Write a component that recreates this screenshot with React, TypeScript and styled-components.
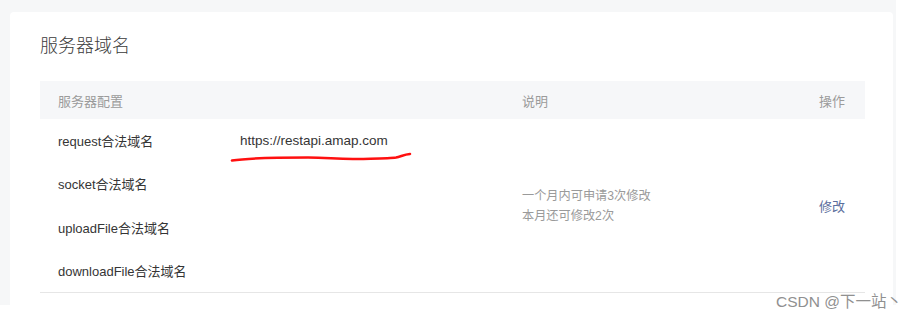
import React from "react";
import styled, { createGlobalStyle } from "styled-components";

const Global = createGlobalStyle`
  html, body { margin: 0; padding: 0; background: #ffffff; }
  body { font-family: "Liberation Sans", "Noto Sans CJK SC", sans-serif; }
`;

const Page = styled.div`
  position: relative;
  width: 921px;
  height: 318px;
  overflow: hidden;
  background: #ffffff;
`;

const Backdrop = styled.div`
  width: 896px;
  height: 305px;
  box-sizing: border-box;
  padding: 12px 3px 0 10px;
  background: #f6f7f8;
  display: flex;
`;

const Card = styled.section`
  flex: 1;
  background: #ffffff;
  border-radius: 4px 4px 0 0;
  padding: 22px 28px 0 30px;
  display: flex;
  flex-direction: column;
`;

const Title = styled.h2`
  margin: 0 0 23px 0;
  font-size: 18px;
  line-height: 24px;
  font-weight: 300;
  color: #3a3a3a;
`;

const Grid = styled.div`
  display: grid;
  grid-template-columns: 200px 282px 1fr auto;
`;

const HeadCell = styled.div<{ $span?: number; $first?: boolean; $last?: boolean }>`
  grid-column: span ${(p) => p.$span ?? 1};
  background: #f6f7f9;
  height: 38px;
  display: flex;
  align-items: center;
  font-size: 13px;
  color: #9b9b9b;
  padding-left: ${(p) => (p.$first ? "18px" : "0")};
  padding-right: ${(p) => (p.$last ? "20px" : "0")};
`;

const Body = styled.div`
  grid-column: 1 / -1;
  display: grid;
  grid-template-columns: 200px 282px 1fr auto;
  grid-template-rows: repeat(4, 43.25px);
  border-bottom: 1px solid #e6e6e6;
`;

const NameCell = styled.div<{ $row: number }>`
  grid-column: 1;
  grid-row: ${(p) => p.$row};
  display: flex;
  align-items: center;
  padding-left: 18px;
  font-size: 13px;
  color: #353535;
`;

const UrlCell = styled.div`
  grid-column: 2;
  grid-row: 1;
  display: flex;
  align-items: center;
  font-size: 13.5px;
  color: #353535;
`;

const DescCell = styled.div`
  grid-column: 3;
  grid-row: 1 / span 4;
  display: flex;
  flex-direction: column;
  justify-content: center;
  font-size: 12.2px;
  line-height: 20px;
  color: #9a9a9a;
`;

const ActionCell = styled.div`
  grid-column: 4;
  grid-row: 1 / span 4;
  display: flex;
  align-items: center;
  padding-right: 20px;
  font-size: 13px;
  color: #5a6d9c;
  cursor: pointer;
`;

const Scribble = styled.svg`
  position: absolute;
  left: 228px;
  top: 148px;
  pointer-events: none;
`;

const Watermark = styled.div`
  position: absolute;
  left: 776px;
  top: 291px;
  font-size: 15.5px;
  line-height: 22px;
  color: #909090;
  white-space: nowrap;
`;

const names = ["request合法域名", "socket合法域名", "uploadFile合法域名", "downloadFile合法域名"];

export default function App() {
  return (
    <Page>
      <Global />
      <Backdrop>
        <Card>
          <Title>服务器域名</Title>
          <Grid>
            <HeadCell $span={2} $first>服务器配置</HeadCell>
            <HeadCell>说明</HeadCell>
            <HeadCell $last>操作</HeadCell>
            <Body>
              {names.map((n, i) => (
                <NameCell key={n} $row={i + 1}>{n}</NameCell>
              ))}
              <UrlCell>https://restapi.amap.com</UrlCell>
              <DescCell>
                <span>一个月内可申请3次修改</span>
                <span>本月还可修改2次</span>
              </DescCell>
              <ActionCell>修改</ActionCell>
            </Body>
          </Grid>
        </Card>
      </Backdrop>
      <Scribble width="190" height="20" viewBox="0 0 190 20">
        <path
          d="M4 12.5 C 20 10, 50 9.5, 80 9.5 C 100 9.5, 110 11.5, 130 11 C 150 10.5, 162 10.5, 168 9.5 C 173 8.5, 176 6.5, 182 6"
          fill="none"
          stroke="#ff1010"
          strokeWidth="2.6"
          strokeLinecap="round"
        />
      </Scribble>
      <Watermark>CSDN @下一站丶</Watermark>
    </Page>
  );
}
